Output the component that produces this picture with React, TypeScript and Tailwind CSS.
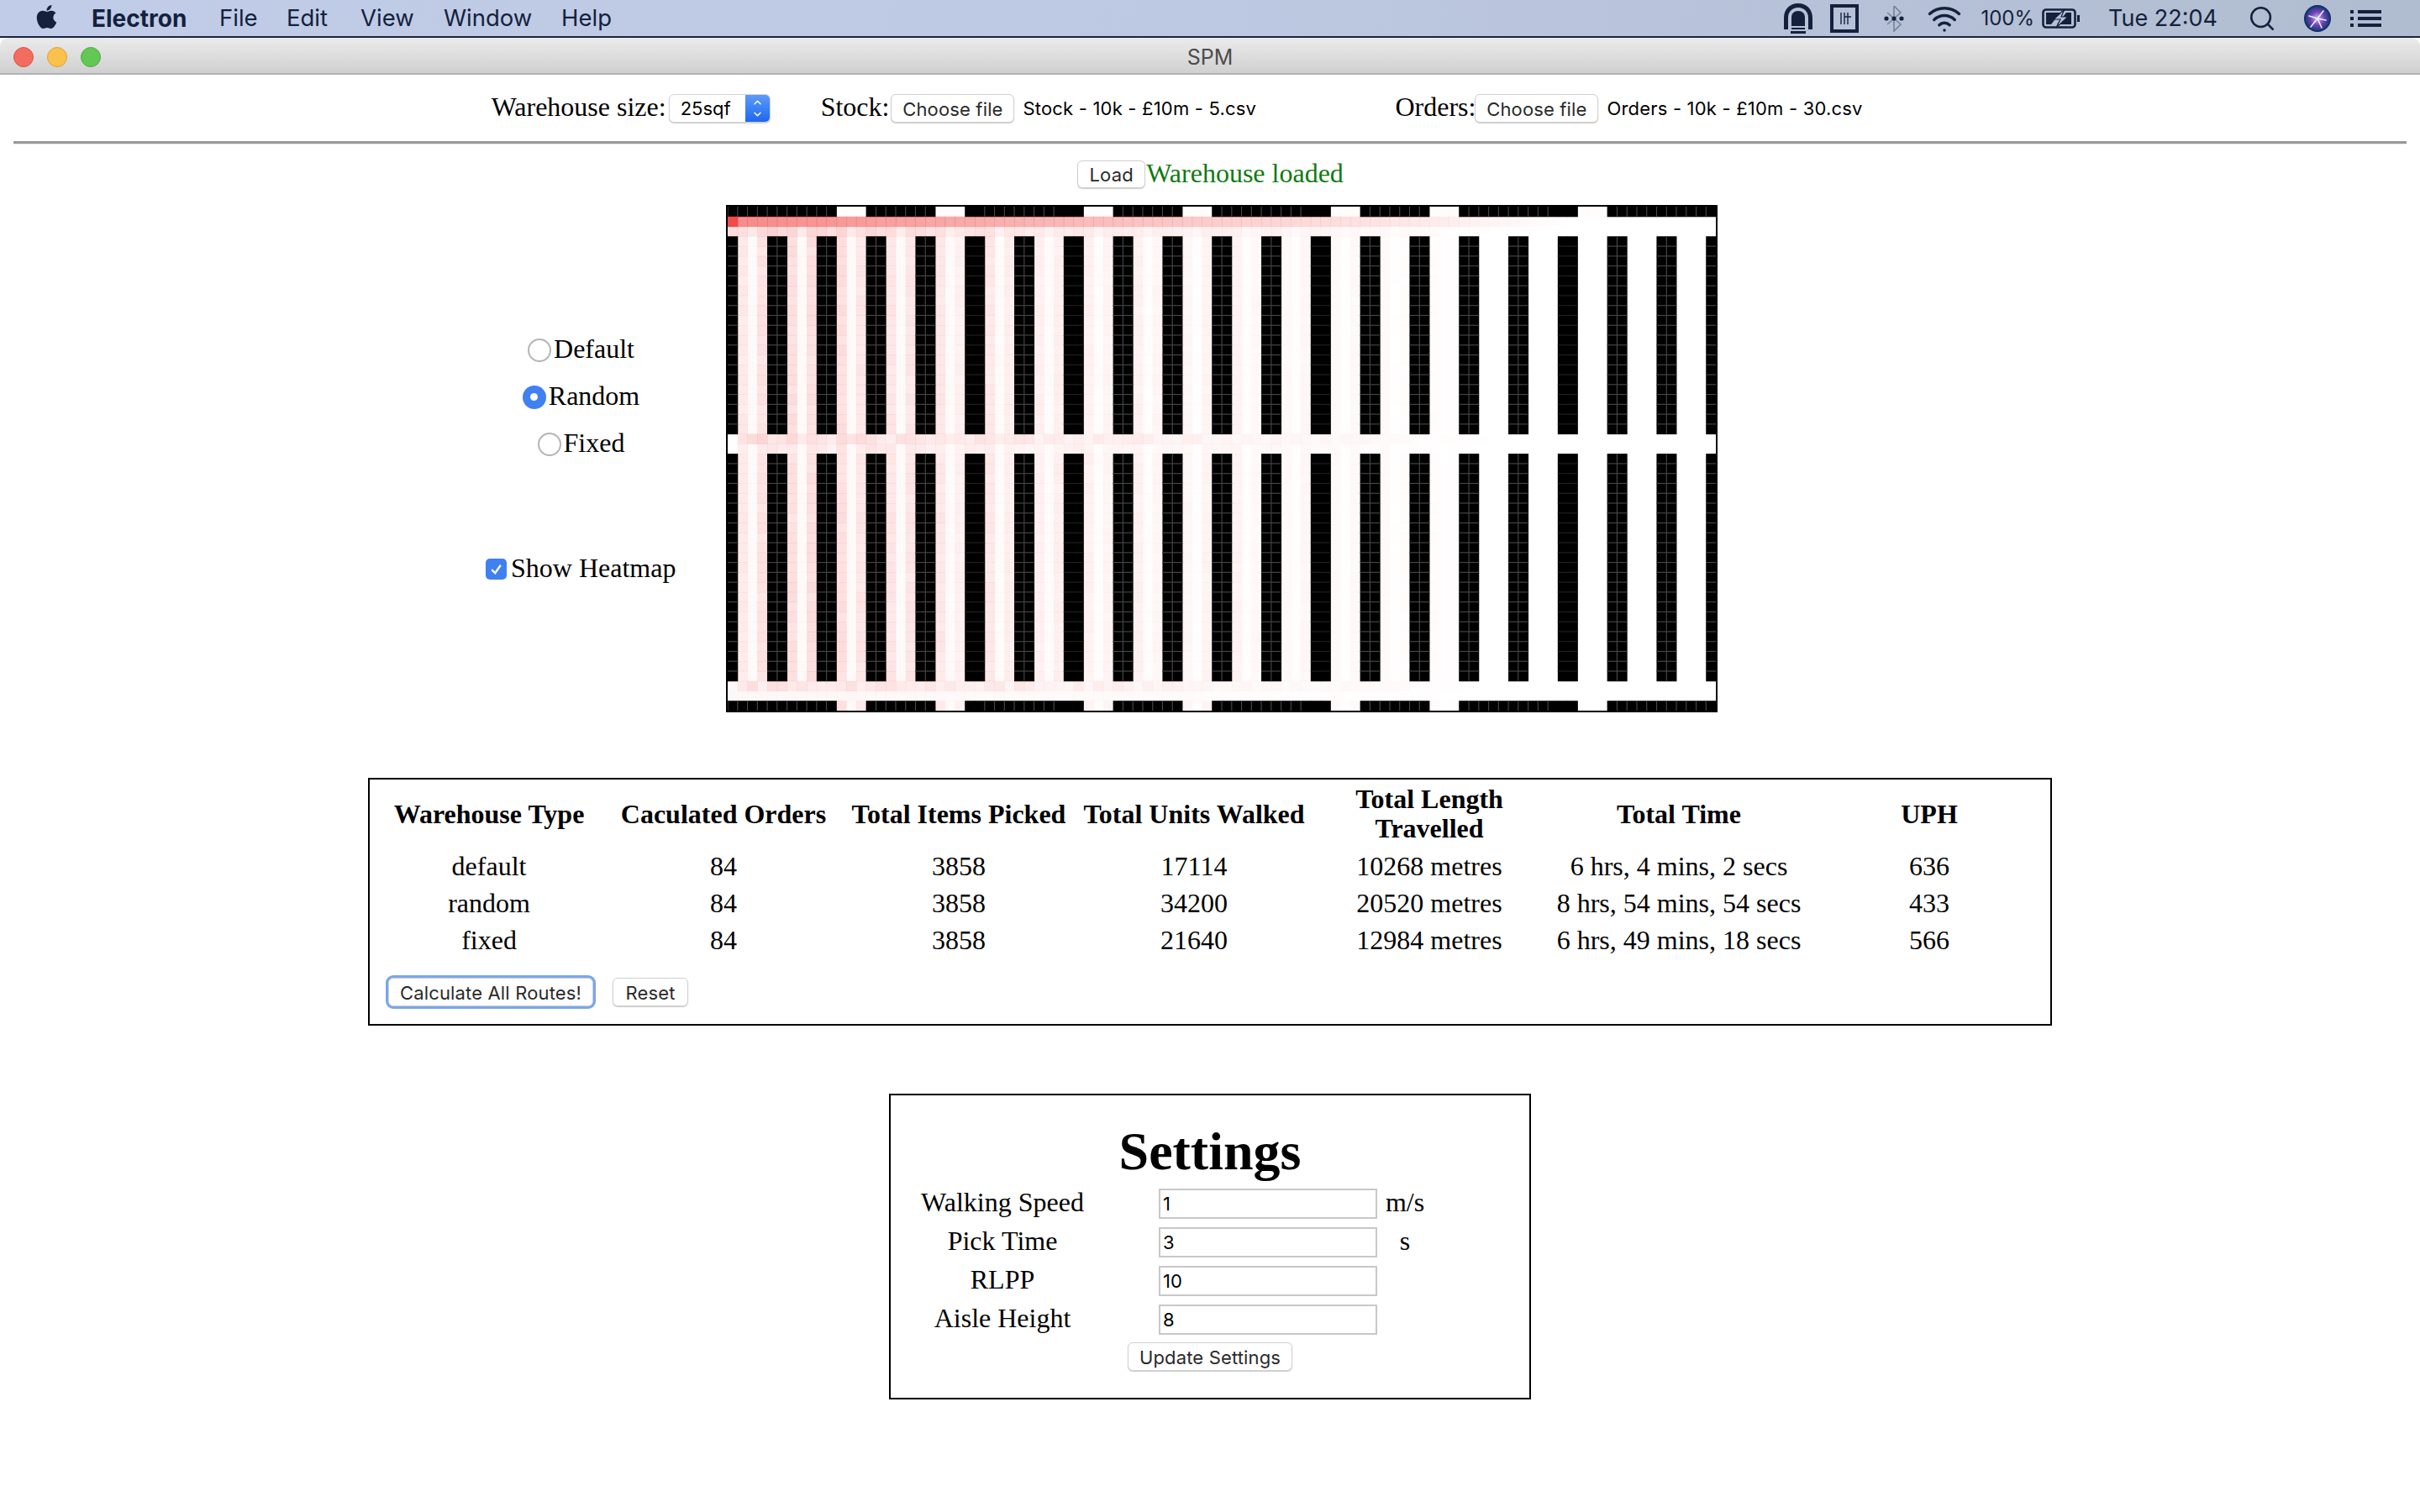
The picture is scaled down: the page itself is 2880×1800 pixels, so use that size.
import { ChevronDown, ChevronUp, Search, Wifi } from 'lucide-react';
import { FaApple } from 'react-icons/fa';

const COLS = 100;
const ROWS = 51;
const CELL = 11.76;
const GAPS = [11, 21, 36, 46, 61, 71, 86];
const PLAIN_SHELVES = [24, 34, 59, 84];

const serif = "[font-family:'Liberation_Serif',serif]";
const ui = "[font-family:Inter,sans-serif]";
const nativeButton = 'rounded-[6px] border border-[#cfcfcf] bg-white pt-[2px] text-[22px] leading-none tracking-[0.15px] text-[#2a2a2a] shadow-[0_1px_1px_rgba(0,0,0,0.2)] flex items-center justify-center';

const results = [
    { type: 'default', orders: 84, items: 3858, units: 17114, length: '10268 metres', time: '6 hrs, 4 mins, 2 secs', uph: 636 },
    { type: 'random', orders: 84, items: 3858, units: 34200, length: '20520 metres', time: '8 hrs, 54 mins, 54 secs', uph: 433 },
    { type: 'fixed', orders: 84, items: 3858, units: 21640, length: '12984 metres', time: '6 hrs, 49 mins, 18 secs', uph: 566 },
];

const settings = [
    { label: 'Walking Speed', value: '1', unit: 'm/s' },
    { label: 'Pick Time', value: '3', unit: 's' },
    { label: 'RLPP', value: '10', unit: '' },
    { label: 'Aisle Height', value: '8', unit: '' },
];

const noise = (a: number, b: number) => {
    const n = Math.sin(a * 12.9898 + b * 78.233) * 43758.5453;
    return n - Math.floor(n);
};

const isEdgeRow = (r: number) => r === 0 || r === 50;
const isCrossRow = (r: number) => r === 1 || r === 2 || r === 23 || r === 24 || r === 48 || r === 49;
const isGap = (c: number) => GAPS.some(g => c >= g && c < g + 3);
const isShelfCol = (c: number) => c === 0 || c === 99 || c % 5 === 4 || c % 5 === 0;

function isShelf(r: number, c: number) {
    if (isEdgeRow(r)) return !isGap(c);
    if (isCrossRow(r)) return false;
    return isShelfCol(c);
}

function heat(r: number, c: number) {
    const fade = Math.max(0, 1 - c / 78);
    const n = noise(c, r);
    const colN = noise(c, 7);
    const aisle = c % 5 === 2 ? 0.03 : 0.1 + colN * 0.09;
    const base = aisle * fade * (0.85 + n * 0.3);
    if (r === 0) return c === 0 ? 0.42 : 0.015;
    if (r === 1) return c === 0 ? 0.92 : Math.max(0, 0.6 * (1 - c / 85));
    if (r === 2) return 0.1 * fade + base * 0.7;
    if (r === 23) return c === 0 ? 0.01 : fade * (0.1 + n * 0.12);
    if (r === 24) return c === 0 ? 0.01 : Math.max(0.03 * fade, base * 0.8);
    if (r === 48) return c === 0 ? 0.03 : fade * (0.08 + n * 0.11);
    if (r === 49) return 0.045 * fade;
    return base;
}

function Heatmap() {
    const cells = [];
    const lines = [];
    for (let r = 0; r < ROWS; r++) {
        for (let c = 0; c < COLS; c++) {
            const x = c * CELL;
            const y = r * CELL;
            if (isShelf(r, c)) {
                cells.push(<rect key={`${r}-${c}`} x={x} y={y} width={CELL + 0.5} height={CELL + 0.5} fill="#000" />);
                const plain = PLAIN_SHELVES.includes(c) || PLAIN_SHELVES.includes(c - 1);
                if (isShelf(r, c - 1) && !plain) {
                    lines.push(<rect key={`v${r}-${c}`} x={x - 0.5} y={y} width={1.1} height={CELL} fill="#484848" />);
                }
                if (!isEdgeRow(r) && isShelf(r - 1, c)) {
                    lines.push(<rect key={`h${r}-${c}`} x={x} y={y - 0.5} width={CELL} height={1.1} fill={plain ? '#222' : '#484848'} />);
                }
            } else {
                const h = heat(r, c);
                if (h > 0.004) {
                    cells.push(<rect key={`${r}-${c}`} x={x} y={y} width={CELL + 0.5} height={CELL + 0.5} fill="#f03c3c" fillOpacity={h} />);
                }
            }
        }
    }
    return (
        <svg
            viewBox={`0 0 ${COLS * CELL} ${ROWS * CELL}`}
            preserveAspectRatio="none"
            className="block w-[1180px] h-[604px] shrink-0 border-2 border-black bg-white blur-[0.6px]"
        >
            {cells}
            {lines}
        </svg>
    );
}

function TunnelIcon() {
    return (
        <svg viewBox="0 0 34 36" className="w-[34px] h-[36px]" fill="#14213d">
            <path d="M0 31V17C0 7 7 0 17 0s17 7 17 17v14h-5V17c0-7-5-12-12-12S5 10 5 17v14z" />
            <path d="M9 27V17c0-5 3-8 8-8s8 3 8 8v10z" />
            <rect x="9" y="29" width="16" height="2" />
            <rect x="8" y="33" width="18" height="3" />
        </svg>
    );
}

function GridBoxIcon() {
    return (
        <svg viewBox="0 0 34 34" className="w-[34px] h-[34px]" fill="none" stroke="#14213d">
            <rect x="2" y="2" width="30" height="30" strokeWidth="4" />
            <path d="M13 10v14M17 10v14M21 10v14M17 15h8" strokeWidth="1.4" />
        </svg>
    );
}

function BluetoothIcon() {
    return (
        <svg viewBox="0 0 24 32" className="w-[24px] h-[32px]" fill="none">
            <path d="M12 1v30l8-8L4 9M12 1l8 8L4 23" stroke="#77839a" strokeWidth="1.6" />
            <circle cx="3" cy="16" r="2.6" fill="#14213d" />
            <circle cx="12" cy="16" r="2.6" fill="#14213d" />
            <circle cx="21" cy="16" r="2.6" fill="#14213d" />
        </svg>
    );
}

function BatteryIcon() {
    return (
        <svg viewBox="0 0 46 24" className="w-[46px] h-[24px]" fill="none" stroke="#14213d">
            <rect x="1.5" y="1.5" width="38" height="21" rx="3.5" strokeWidth="2.6" />
            <path d="M43.5 8v8" strokeWidth="3" />
            <path d="M5 5h17L11 19H5zM35 19H18L29 5h6z" fill="#14213d" stroke="none" />
            <path d="M27 1 14 13h8l-5 10 14-13h-8z" fill="#b4bfd4" stroke="#14213d" strokeWidth="1.2" />
        </svg>
    );
}

function SiriIcon() {
    return (
        <svg viewBox="0 0 32 32" className="w-[32px] h-[32px]">
            <defs>
                <radialGradient id="siri" cx="50%" cy="50%" r="55%">
                    <stop offset="0%" stopColor="#b9c8f5" />
                    <stop offset="45%" stopColor="#7d3fb5" />
                    <stop offset="75%" stopColor="#23408f" />
                    <stop offset="100%" stopColor="#0c1024" />
                </radialGradient>
            </defs>
            <circle cx="16" cy="16" r="16" fill="url(#siri)" />
            <path d="M16 16 23 7M16 16l10 2M16 16l5 11M16 16 8 26M16 16 6 13" stroke="#e6f0ff" strokeWidth="1.6" strokeLinecap="round" />
        </svg>
    );
}

function ListIcon() {
    return (
        <svg viewBox="0 0 37 20" className="w-[37px] h-[20px]" fill="#14213d">
            <rect x="0" y="0" width="4" height="4" />
            <rect x="9" y="0" width="28" height="4" />
            <rect x="0" y="8" width="4" height="4" />
            <rect x="9" y="8" width="28" height="4" />
            <rect x="0" y="16" width="4" height="4" />
            <rect x="9" y="16" width="28" height="4" />
        </svg>
    );
}

function MenuBar() {
    return (
        <div className={`${ui} flex items-center h-[45px] shrink-0 border-b-2 border-[#18253f] bg-gradient-to-r from-[#c1cde8] via-[#bdc8e2] to-[#b0bccf] text-[27.5px] leading-none text-[#14213d]`}>
            <FaApple className="ml-[41px] w-[29px] h-[32px] mb-1" />
            <span className="ml-[39px] w-[152px] font-bold text-[28px]">Electron</span>
            <span className="w-[80px]">File</span>
            <span className="w-[88px]">Edit</span>
            <span className="w-[99px]">View</span>
            <span className="w-[140px]">Window</span>
            <span>Help</span>
            <div className="ml-auto flex items-center">
                <TunnelIcon />
                <span className="ml-[21px]"><GridBoxIcon /></span>
                <span className="ml-[30px]"><BluetoothIcon /></span>
                <Wifi className="ml-[25px] w-[46px] h-[42px]" strokeWidth={2} />
                <span className="ml-[20px] text-[24px] whitespace-nowrap">100%</span>
                <span className="ml-[9px]"><BatteryIcon /></span>
                <span className="ml-[33px] w-[131px] whitespace-nowrap text-[27px]">Tue 22:04</span>
                <Search className="ml-[35px] w-[34px] h-[34px]" strokeWidth={1.8} />
                <span className="ml-[33px]"><SiriIcon /></span>
                <span className="ml-[23px] mr-[46px]"><ListIcon /></span>
            </div>
        </div>
    );
}

function TitleBar() {
    return (
        <div className={`${ui} relative flex items-center justify-center h-[44px] shrink-0 rounded-t-[10px] border-b-2 border-[#b3b3b3] bg-gradient-to-b from-[#ebebeb] to-[#d0d0d0] pt-[5px] text-[25px] text-[#4c4c4c]`}>
            <div className="absolute left-[16px] top-[11px] flex gap-[16px]">
                <span className="w-[24px] h-[24px] rounded-full border border-[#dd5248] bg-[#f26d60]" />
                <span className="w-[24px] h-[24px] rounded-full border border-[#dfa234] bg-[#fbc14e]" />
                <span className="w-[24px] h-[24px] rounded-full border border-[#4ead3f] bg-[#62c755]" />
            </div>
            SPM
        </div>
    );
}

function FilePicker({ label, file, labelClass }: { label: string; file: string; labelClass: string }) {
    return (
        <div className="flex items-center">
            <span className={labelClass}>{label}</span>
            <div className={`${ui} flex items-center w-[540px] text-[22px] tracking-[0.2px] text-black`}>
                <button className={`${nativeButton} w-[147px] h-[34px]`}>Choose file</button>
                <span className="ml-[10px] pt-[2px] whitespace-nowrap">{file}</span>
            </div>
        </div>
    );
}

function TopControls() {
    return (
        <div className={`${serif} flex items-center justify-center gap-[60px] h-[79px] text-[32px] text-black`}>
            <div className="flex items-center">
                <span className="mr-[3px] mb-[3px]">Warehouse size:</span>
                <div className={`${ui} flex items-center w-[121px] h-[34px] rounded-[6px] border border-[#d4d4d4] bg-white text-[22px] shadow-[0_1px_1px_rgba(0,0,0,0.2)] overflow-hidden`}>
                    <span className="flex-1 pl-[13px] pt-[2px]">25sqf</span>
                    <span className="flex flex-col items-center justify-center w-[29px] h-full bg-gradient-to-b from-[#5b9bf8] to-[#1f66f0] text-white">
                        <ChevronUp className="w-[17px] h-[14px]" strokeWidth={2.5} />
                        <ChevronDown className="w-[17px] h-[14px]" strokeWidth={2.5} />
                    </span>
                </div>
            </div>
            <FilePicker label="Stock:" file="Stock - 10k - £10m - 5.csv" labelClass="mr-[2px] mb-[3px]" />
            <FilePicker label="Orders:" file="Orders - 10k - £10m - 30.csv" labelClass="-mr-[1px] mb-[3px]" />
        </div>
    );
}

function Radio({ checked, label }: { checked?: boolean; label: string }) {
    return (
        <div className="flex items-center justify-center h-[56px]">
            {checked ? (
                <span className="flex items-center justify-center w-[28px] h-[28px] mt-[3px] rounded-full bg-[#3f80f2]">
                    <span className="w-[9px] h-[9px] rounded-full bg-white" />
                </span>
            ) : (
                <span className="w-[28px] h-[28px] mt-[3px] rounded-full border-2 border-[#b5b5b5] bg-white" />
            )}
            <span className="ml-[3px]">{label}</span>
        </div>
    );
}

function Warehouse() {
    return (
        <div className={`${serif} flex pl-[578px] text-[32px] text-black`}>
            <div className="w-[227px] pt-[143px]">
                <Radio label="Default" />
                <Radio checked label="Random" />
                <Radio label="Fixed" />
                <div className="flex items-center h-[56px] mt-[94px]">
                    <span className="flex items-center justify-center w-[25px] h-[25px] rounded-[5px] bg-[#3f80f2]">
                        <svg viewBox="0 0 16 16" className="w-[19px] h-[19px]" fill="none" stroke="#fff" strokeWidth="2">
                            <path d="M3.5 8.5 7 12l5.5-8" />
                        </svg>
                    </span>
                    <span className="ml-[5px] mb-[3px] whitespace-nowrap">Show Heatmap</span>
                </div>
            </div>
            <div className="ml-[59px]">
                <Heatmap />
            </div>
        </div>
    );
}

function ResultsTable() {
    const headers = ['Warehouse Type', 'Caculated Orders', 'Total Items Picked', 'Total Units Walked', 'Total Length Travelled', 'Total Time', 'UPH'];
    return (
        <div className={`${serif} w-[2004px] h-[295px] mx-auto mt-[78px] border-2 border-black pl-[4px] pt-[3px] text-[32px] leading-[36px] text-black`}>
            <table className="table-fixed w-[1992px] border-collapse">
                <colgroup>
                    <col className="w-[276px]" />
                    <col className="w-[282px]" />
                    <col className="w-[278px]" />
                    <col className="w-[282px]" />
                    <col className="w-[278px]" />
                    <col className="w-[316px]" />
                    <col className="w-[280px]" />
                </colgroup>
                <thead>
                    <tr className="h-[78px]">
                        {headers.map(h => (
                            <th key={h} className="p-0 pb-[2px] font-bold text-center leading-[35px]">{h}</th>
                        ))}
                    </tr>
                </thead>
                <tbody>
                    {results.map(row => (
                        <tr key={row.type} className="h-[44px] text-center">
                            <td className="p-0 pb-[1px]">{row.type}</td>
                            <td className="p-0 pb-[1px]">{row.orders}</td>
                            <td className="p-0 pb-[1px]">{row.items}</td>
                            <td className="p-0 pb-[1px]">{row.units}</td>
                            <td className="p-0 pb-[1px]">{row.length}</td>
                            <td className="p-0 pb-[1px] whitespace-nowrap">{row.time}</td>
                            <td className="p-0 pb-[1px]">{row.uph}</td>
                        </tr>
                    ))}
                </tbody>
            </table>
            <div className={`${ui} flex items-center gap-[23px] mt-[23px] ml-[18px]`}>
                <button className={`${nativeButton} w-[244px] h-[34px] ring-[3px] ring-[#7ba6ea]`}>Calculate All Routes!</button>
                <button className={`${nativeButton} w-[90px] h-[34px]`}>Reset</button>
            </div>
        </div>
    );
}

function Settings() {
    return (
        <div className={`${serif} w-[764px] h-[364px] mx-auto mt-[81px] border-2 border-black pt-[24px] text-[32px] text-black`}>
            <h1 className="h-[87px] text-center text-[64px] font-bold leading-[86px]">Settings</h1>
            <div className="grid grid-cols-[319px_260px_66px] gap-y-[10px]">
                {settings.map(s => (
                    <div key={s.label} className="contents">
                        <span className="w-[266px] h-[36px] text-center leading-[32px]">{s.label}</span>
                        <input
                            readOnly
                            value={s.value}
                            className={`${ui} w-[260px] h-[36px] border-2 border-[#c8c8c8] bg-white px-[3px] text-[22px] text-black`}
                        />
                        <span className="h-[36px] text-center leading-[32px]">{s.unit}</span>
                    </div>
                ))}
            </div>
            <div className={`${ui} flex justify-center mt-[9px]`}>
                <button className={`${nativeButton} w-[196px] h-[34px]`}>Update Settings</button>
            </div>
        </div>
    );
}

export default function App() {
    return (
        <div className="flex flex-col w-[2880px] h-[1800px] overflow-hidden bg-white">
            <MenuBar />
            <TitleBar />
            <TopControls />
            <div className="mx-[16px] h-[4px] border-t-[3px] border-[#999] border-b border-b-[#e8e8e8]" />
            <div className={`${serif} flex items-center justify-center gap-[1px] h-[72px] pt-[1px] pb-[3px] pl-[1px] text-[32px] text-[#117a11]`}>
                <button className={`${ui} ${nativeButton} w-[81px] h-[33px]`}>Load</button>
                <span className="mb-[3px]">Warehouse loaded</span>
            </div>
            <Warehouse />
            <ResultsTable />
            <Settings />
        </div>
    );
}
